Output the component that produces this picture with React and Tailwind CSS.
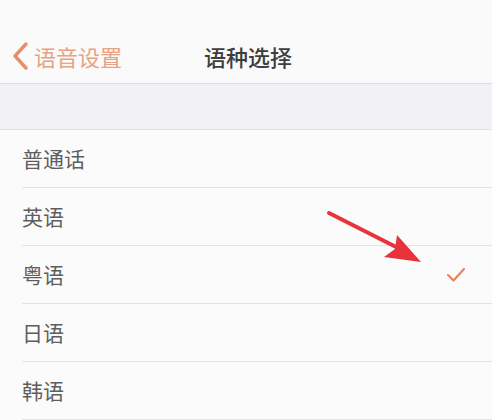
const languages = ['普通话', '英语', '粤语', '日语', '韩语']
const selected = '粤语'

const cjk = { fontFamily: '"Noto Sans CJK SC", "Noto Sans", sans-serif' }

export default function App() {
  return (
    <div className="relative w-[500px] h-[420px] overflow-hidden bg-[#fbfbfb] flex" style={cjk}>
      <div className="w-[492px] flex flex-col">
        {/* 顶部导航 */}
        <div className="h-[84px] pt-[28px] border-b border-[#dedede] bg-[#fafafa] relative flex items-center">
          <div className="flex items-center pl-[10px] text-[#e9a183]">
            <svg width="20" height="30" viewBox="0 0 20 30" className="mr-[4px]">
              <path d="M16 3 L5 15 L16 27" fill="none" stroke="#e58f6c" strokeWidth="3.4" strokeLinecap="round" strokeLinejoin="round" />
            </svg>
            <span className="text-[22px] leading-none">语音设置</span>
          </div>
          <div className="absolute left-[204px] top-[28px] h-[56px] flex items-center text-[22px] leading-none text-[#3e3e3e] font-medium">
            语种选择
          </div>
        </div>

        {/* 分组间隔 */}
        <div className="h-[46px] bg-[#f2f2f6] border-b border-[#e2e2e2]" />

        {/* 语种列表 */}
        {languages.map(lang => (
          <div key={lang} className="pl-[22px] bg-[#fbfbfb]">
            <div className="h-[58px] flex items-center justify-between border-b border-[#e4e4e4] pr-[26px]">
              <span className="text-[21px] leading-none text-[#5e5e5e]">{lang}</span>
              {lang === selected && (
                <svg width="20" height="16" viewBox="0 0 20 16">
                  <path d="M2 8 L7.5 13.5 L18 2" fill="none" stroke="#e0825a" strokeWidth="2" strokeLinecap="round" strokeLinejoin="round" />
                </svg>
              )}
            </div>
          </div>
        ))}
      </div>
      <div className="flex-1 bg-white" />

      {/* 红色箭头标注 */}
      <svg className="absolute left-0 top-0 pointer-events-none" width="500" height="420" viewBox="0 0 500 420">
        <path d="M329 213 L402 250" stroke="#e8323c" strokeWidth="4" strokeLinecap="round" />
        <path d="M421 262 L384 257 L395 249 L397 235 Z" fill="#e8323c" />
      </svg>
    </div>
  )
}
